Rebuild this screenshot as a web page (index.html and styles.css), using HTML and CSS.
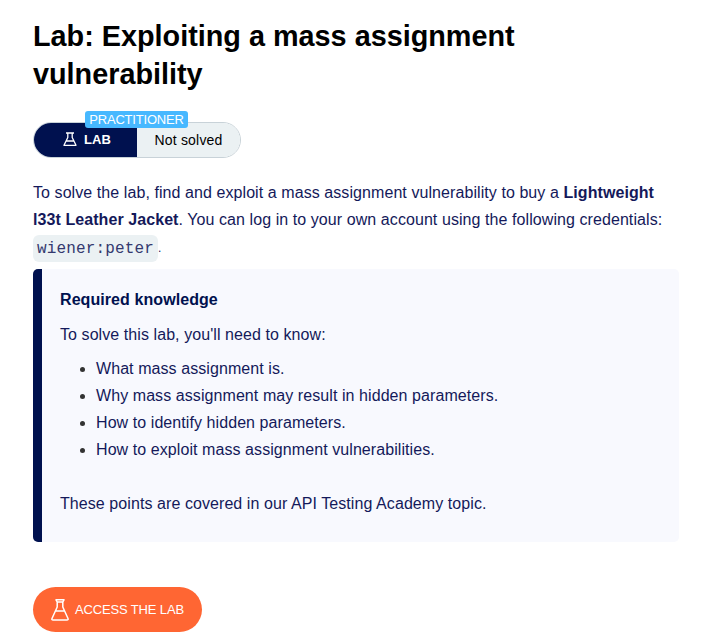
FILE: index.html
```html
<!DOCTYPE html>
<html lang="en">
<head>
<meta charset="utf-8">
<title>Lab: Exploiting a mass assignment vulnerability</title>
<link rel="stylesheet" href="styles.css">
</head>
<body>
<main>
  <h1>Lab: Exploiting a mass assignment vulnerability</h1>
  <div class="status">
    <div class="status-lab">
      <svg class="flask flask-small" viewBox="0 0 14 15" width="14" height="15"><path d="M3 1h8M4.800 1v4.500L1 13.300h12L9.200 5.500V1M3.600 9h6.800"/></svg>
      <span>LAB</span>
    </div>
    <div class="status-state">Not solved</div>
    <span class="level">PRACTITIONER</span>
  </div>
  <p class="intro">To solve the lab, find and exploit a mass assignment vulnerability to buy a <b>Lightweight l33t Leather Jacket</b>. You can log in to your own account using the following credentials: <code>wiener:peter</code><span class="stop">.</span></p>
  <section class="note">
    <h2>Required knowledge</h2>
    <p>To solve this lab, you'll need to know:</p>
    <ul>
      <li>What mass assignment is.</li>
      <li>Why mass assignment may result in hidden parameters.</li>
      <li>How to identify hidden parameters.</li>
      <li>How to exploit mass assignment vulnerabilities.</li>
    </ul>
    <p>These points are covered in our API Testing Academy topic.</p>
  </section>
  <a class="button">
    <svg class="flask" viewBox="0 0 18 22" width="18" height="22"><path d="M5 .8h8L11.800 3v5L17 19.500q.5 1.500-1 1.500H2q-1.500 0-1-1.500L6.200 8V3zM6.200 3h5.600M4.500 12h9"/></svg>
    <span>ACCESS THE LAB</span>
  </a>
</main>
</body>
</html>
```
FILE: styles.css
```css
* { box-sizing: border-box; }
body { margin: 0; background: #fff; color: #14195a; font: 16px/27px "Liberation Sans", Arial, sans-serif; letter-spacing: .075px; }
main { padding: 17px 33px 0; }
h1 { margin: 0; width: 560px; color: #000; font: bold 28.8px/38px "Liberation Sans", Arial, sans-serif; letter-spacing: 0; }
.status { position: relative; display: flex; width: 208px; height: 36px; margin-top: 29px; border: 1px solid #c8d2d8; border-radius: 18px; font-size: 14px; line-height: 34px; }
.status-lab { display: flex; align-items: center; padding-left: 29px; gap: 7px; width: 103px; background: #00114f; color: #fff; font-size: 13px; font-weight: bold; border-radius: 17px 0 0 17px; }
.status-lab span { line-height: 34px; }
.status-state { flex: 1; text-align: center; background: #ebf1f3; color: #000; border-radius: 0 17px 17px 0; letter-spacing: .2px; }
.level { position: absolute; left: 51px; top: -12px; width: 103px; height: 17px; border-radius: 3px; background: #47b8ff; color: #fff; font-size: 13px; line-height: 17px; text-align: center; letter-spacing: -.2px; }
.flask { flex: none; fill: none; stroke: #fff; stroke-width: 1.5; stroke-linejoin: round; }
.flask-small { margin-bottom: 2px; stroke-width: 1.3; }
.intro { margin: 21px 0 0; }
code { position: relative; padding: 5px 4px 4px; border-radius: 6px; background: #ebf1f3; color: #34396f; font: 16px/25px "Liberation Mono", monospace; letter-spacing: .15px; top: 1px; }
.stop { font-size: 12px; }
.note { width: 646px; height: 273px; margin-top: 7px; padding: 17px 18px 0; border-left: 9px solid #00114f; border-radius: 5px; background: #f8f9fe; }
.note h2 { margin: 0 0 8px; font-size: 16px; line-height: 27px; color: #00114f; }
.note p { margin: 0; }
.note ul { margin: 7px 0 27px; padding-left: 36px; }
.note li::marker { color: #333; }
.button { display: flex; align-items: center; width: 169px; height: 45px; margin-top: 45px; padding-left: 18px; gap: 6px; border-radius: 23px; background: #ff6633; color: #fff; font-size: 13px; letter-spacing: -.15px; white-space: nowrap; }
```
